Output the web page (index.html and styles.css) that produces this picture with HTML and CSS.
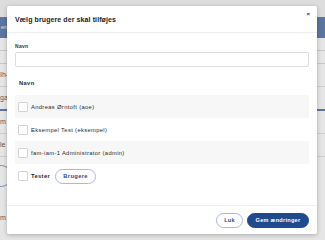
FILE: index.html
```html
<!DOCTYPE html>
<html lang="da">
<head>
  <meta charset="UTF-8">
  <meta name="viewport" content="width=device-width, initial-scale=1.0">
  <title>Vælg brugere</title>
  <link rel="stylesheet" href="styles.css">
</head>
<body>
  <div class="page">
    <div class="page-top"></div>
    <div class="page-nav"><span>en</span></div>
    <div class="page-content">
      <div class="page-line"></div>
      <div class="page-line"></div>
      <div class="page-text">Ih-</div>
      <div class="page-text page-tab">ga</div>
      <div class="page-text">m</div>
      <div class="page-text">le</div>
      <div class="page-circle"></div>
      <div class="page-text page-last">m</div>
    </div>
  </div>

  <div class="backdrop"></div>

  <div class="modal">
    <div class="modal-header">
      <h1>Vælg brugere der skal tilføjes</h1>
      <span class="close">&times;</span>
    </div>

    <div class="modal-body">
      <label for="navn" class="field-label">Navn</label>
      <input type="text" id="navn" class="field-input">

      <div class="user-table">
        <div class="user-head">Navn</div>
        <div class="user-row striped"><span class="check"></span>Andreas Ørntoft (aoe)</div>
        <div class="user-row"><span class="check"></span>Eksempel Test (eksempel)</div>
        <div class="user-row striped"><span class="check"></span>fam-iam-1 Administrator (admin)</div>
        <div class="user-row group-row"><span class="check"></span><b>Tester</b><span class="pill">Brugere</span></div>
      </div>
    </div>

    <div class="modal-footer">
      <button class="btn btn-outline">Luk</button>
      <button class="btn btn-primary">Gem ændringer</button>
    </div>
  </div>
</body>
</html>
```

FILE: styles.css
```css
body {
  margin: 0;
  width: 325px;
  height: 240px;
  overflow: hidden;
  position: relative;
  font-family: "Liberation Sans", Arial, sans-serif;
  background: #fff;
}
.page {
  height: 240px;
}
.page-top {
  height: 17px;
  background: #f6f6f6;
}
.page-nav {
  height: 21px;
  background: #6683b4;
  color: #fff;
  font-size: 5px;
  padding-left: 1px;
  line-height: 21px;
}
.page-content {
  color: #666;
  font-size: 7px;
}
.page-line {
  height: 12px;
  border-bottom: 1px solid #ddd;
}
.page-text {
  height: 22px;
  line-height: 22px;
  border-bottom: 1px solid #e6e6e6;
}
.page-tab {
  border-bottom: 2px solid #6683b4;
}
.page-circle {
  width: 20px;
  height: 20px;
  margin: 8px 0 8px -10px;
  border: 1px solid #8aa0c8;
  border-radius: 50%;
}
.page-last {
  margin-top: 20px;
  border: none;
}
.backdrop {
  position: absolute;
  inset: 0;
  background: rgba(0, 0, 0, 0.1);
}
.modal {
  position: absolute;
  left: 7px;
  top: 6px;
  width: 310px;
  height: 228px;
  background: #fff;
  border-radius: 2px;
  box-shadow: 0 1px 4px rgba(0,0,0,0.25);
  display: flex;
  flex-direction: column;
}
.modal-header {
  height: 27px;
  box-sizing: border-box;
  border-bottom: 1px solid #eee;
  padding: 0 8px;
  display: flex;
  align-items: center;
  justify-content: space-between;
}
.modal-header h1 {
  margin: 0;
  font-size: 7px;
  font-weight: bold;
  color: #222;
  letter-spacing: 0.1px;
}
.close {
  font-size: 6px;
  font-weight: bold;
  color: #333;
  margin-top: -10px;
  margin-right: -1px;
}
.modal-body {
  flex: 1;
  padding: 9px 8px 0;
}
.field-label {
  display: block;
  font-size: 5px;
  font-weight: bold;
  line-height: 8px;
  margin-bottom: 2px;
  color: #333;
  letter-spacing: 0.3px;
}
.field-input {
  display: block;
  width: 100%;
  height: 15px;
  box-sizing: border-box;
  border: 1px solid #ddd;
  border-radius: 2px;
  margin: 0;
}
.user-table {
  margin-top: 8px;
  font-size: 5.8px;
  color: #2a2a2a;
  letter-spacing: 0.35px;
}
.user-head {
  height: 20px;
  box-sizing: border-box;
  padding: 4px 4px 0;
  line-height: 8px;
  font-weight: bold;
}
.user-row {
  height: 23px;
  display: flex;
  align-items: center;
  gap: 3px;
  padding-left: 3px;
}
.striped {
  background: #f7f7f7;
}
.group-row {
  height: 24px;
}
.check {
  width: 8px;
  height: 8px;
  border: 1px solid #d4d4d4;
  border-radius: 1px;
  background: #fff;
}
.pill {
  margin-left: 2px;
  height: 15px;
  box-sizing: border-box;
  width: 41px;
  border: 1px solid #a8b9d8;
  border-radius: 8px;
  display: flex;
  align-items: center;
  justify-content: center;
  color: #244f8f;
  font-weight: bold;
}
.modal-footer {
  height: 29px;
  box-sizing: border-box;
  border-top: 1px solid #eee;
  padding: 0 8px 0 0;
  display: flex;
  align-items: center;
  justify-content: flex-end;
  gap: 4px;
}
.btn {
  height: 15px;
  border-radius: 8px;
  font-family: inherit;
  font-size: 5.5px;
  font-weight: bold;
  letter-spacing: 0.3px;
  padding: 0;
  cursor: pointer;
}
.btn-outline {
  width: 27px;
  background: #fff;
  border: 1px solid #a8b9d8;
  color: #244f8f;
}
.btn-primary {
  width: 62px;
  background: #1f4b8e;
  border: 1px solid #1f4b8e;
  color: #fff;
}
```
